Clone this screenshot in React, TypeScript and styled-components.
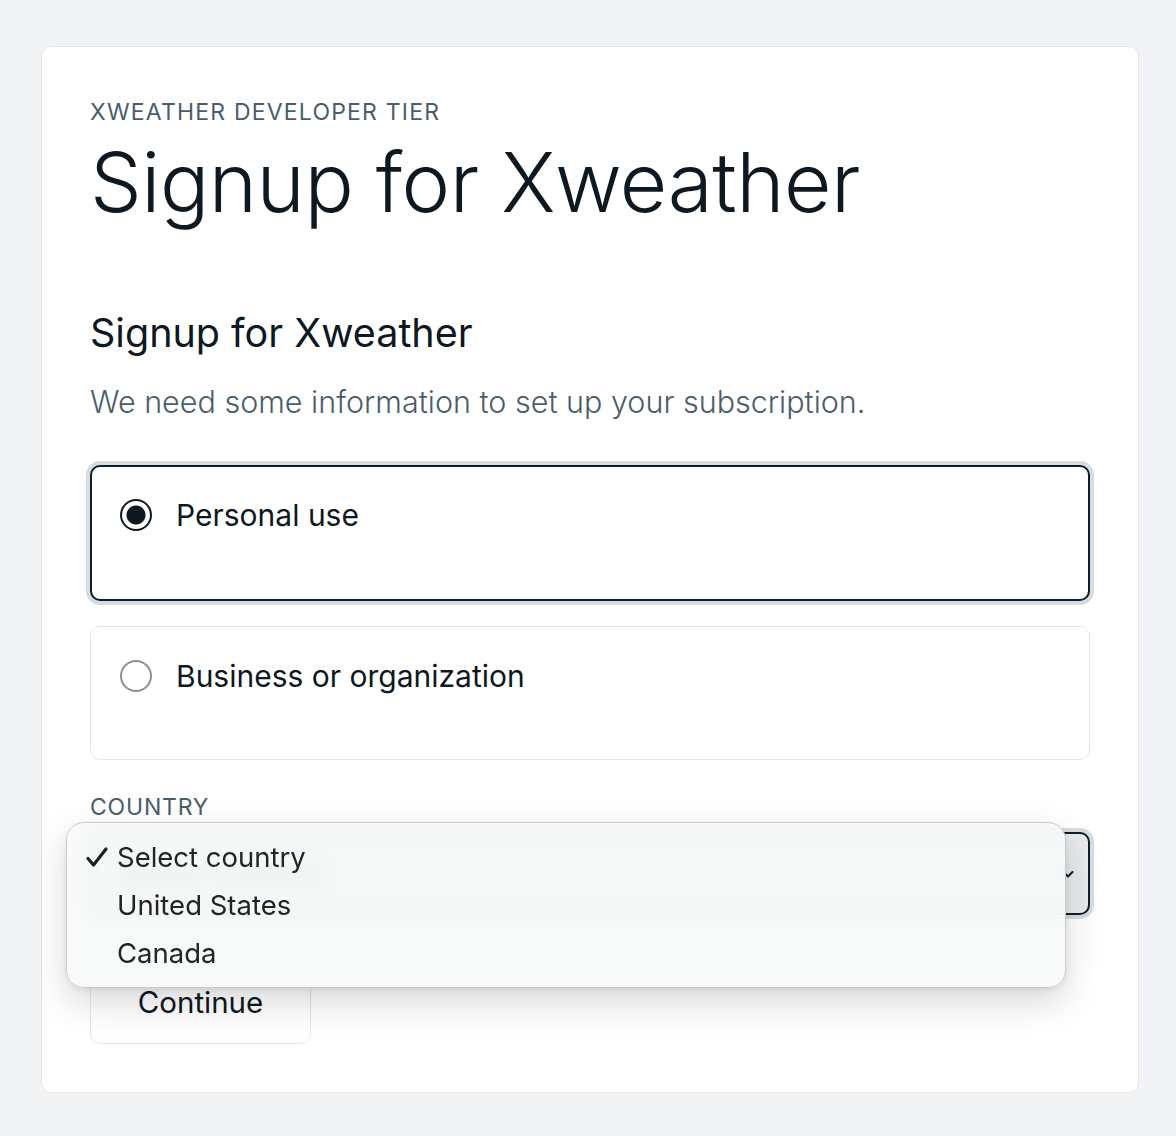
import React from 'react'
import styled, { createGlobalStyle } from 'styled-components'

const GlobalStyle = createGlobalStyle`
  html, body {
    margin: 0;
    padding: 0;
    background: #f1f3f5;
  }
  body {
    font-family: Inter, "Noto Sans", sans-serif;
    color: #0d1821;
  }
`

const options = ['Select country', 'United States', 'Canada']

export default function App() {
  return (
    <>
      <GlobalStyle />
      <Page>
        <Card>
          <Eyebrow>Xweather Developer Tier</Eyebrow>
          <Title>Signup for Xweather</Title>

          <Section>
            <Heading>Signup for Xweather</Heading>
            <Lead>We need some information to set up your subscription.</Lead>

            <Choices>
              <Choice selected>
                <Radio selected />
                <ChoiceLabel>Personal use</ChoiceLabel>
              </Choice>
              <Choice>
                <Radio />
                <ChoiceLabel>Business or organization</ChoiceLabel>
              </Choice>
            </Choices>

            <Field>
              <FieldLabel>Country</FieldLabel>
              <SelectWrap>
                <SelectBox>
                  <SelectText>Select country</SelectText>
                  <svg width="16" height="16" viewBox="0 0 16 16" fill="none">
                    <path d="M3.5 6l4.5 4.5L12.5 6" stroke="#0d1821" strokeWidth="2" strokeLinecap="round" strokeLinejoin="round" />
                  </svg>
                </SelectBox>
                <Menu>
                  {options.map((o, i) => (
                    <MenuItem key={o}>
                      <Check>
                        {i === 0 && (
                          <svg width="24" height="24" viewBox="0 0 24 24" fill="none">
                            <path d="M3 13.5l5.5 6.5L21 4" stroke="#1d1f21" strokeWidth="3.2" strokeLinecap="round" strokeLinejoin="round" />
                          </svg>
                        )}
                      </Check>
                      {o}
                    </MenuItem>
                  ))}
                </Menu>
              </SelectWrap>
            </Field>

            <ContinueButton>Continue</ContinueButton>
          </Section>
        </Card>
      </Page>
    </>
  )
}

const Page = styled.div`
  padding: 46px 37px 44px 41px;
`

const Card = styled.div`
  background: #ffffff;
  border: 1px solid #e4e7ea;
  border-radius: 10px;
  padding: 48px 48px 48px 48px;
`

const Eyebrow = styled.div`
  font-size: 23px;
  line-height: 34px;
  letter-spacing: 1.2px;
  text-transform: uppercase;
  color: #4b5d69;
  margin-bottom: 6px;
`

const Title = styled.h1`
  margin: 0;
  font-size: 82px;
  line-height: 96px;
  font-weight: 300;
  letter-spacing: -0.5px;
  color: #0d1821;
`

const Section = styled.div`
  margin-top: 76px;
`

const Heading = styled.h2`
  margin: 0;
  font-size: 39.5px;
  line-height: 52px;
  font-weight: 420;
  color: #0d1821;
`

const Lead = styled.p`
  margin: 23px 0 0;
  font-size: 30.5px;
  line-height: 40px;
  font-weight: 300;
  color: #4b5d69;
`

const Choices = styled.div`
  display: flex;
  flex-direction: column;
  gap: 25px;
  margin-top: 43px;
`

const Choice = styled.div<{ selected?: boolean }>`
  display: flex;
  align-items: flex-start;
  gap: 24px;
  height: ${p => (p.selected ? '136px' : '134px')};
  box-sizing: border-box;
  padding: ${p => (p.selected ? '32px 28px' : '33px 29px')};
  border-radius: 10px;
  border: ${p => (p.selected ? '2px solid #0f1e2b' : '1px solid #e3e6e9')};
  box-shadow: ${p => (p.selected ? '0 0 0 4px #d6dce0' : 'none')};
  background: #ffffff;
`

const Radio = styled.span<{ selected?: boolean }>`
  flex: none;
  width: 32px;
  height: 32px;
  box-sizing: border-box;
  border-radius: 50%;
  border: 2px solid ${p => (p.selected ? '#0d1821' : '#8b8f96')};
  background: ${p => (p.selected ? 'radial-gradient(circle, #0d1821 0 9px, #ffffff 10px)' : '#ffffff')};
`

const ChoiceLabel = styled.span`
  font-size: 30px;
  line-height: 32px;
  font-weight: 400;
  color: #0d1821;
`

const Field = styled.div`
  margin-top: 32px;
`

const FieldLabel = styled.div`
  font-size: 23px;
  line-height: 30px;
  letter-spacing: 0.8px;
  text-transform: uppercase;
  color: #4b5d69;
`

const SelectWrap = styled.div`
  position: relative;
  margin-top: 10px;
`

const SelectBox = styled.div`
  display: flex;
  align-items: center;
  justify-content: space-between;
  height: 83px;
  box-sizing: border-box;
  padding: 0 12px 0 26px;
  border: 2px solid #0f1e2b;
  border-radius: 10px;
  box-shadow: 0 0 0 4px #d6dce0;
  background: #e8eaec;
`

const SelectText = styled.span`
  font-size: 30px;
  color: #0d1821;
`

const Menu = styled.div`
  position: absolute;
  left: -24px;
  top: -10px;
  width: 1000px;
  box-sizing: border-box;
  padding: 10px 0 10px;
  border-radius: 18px;
  border: 1px solid #c9cbce;
  background: rgba(247, 248, 249, 0.92);
  backdrop-filter: blur(8px);
  box-shadow: 0 14px 36px rgba(0, 0, 0, 0.16), 0 2px 6px rgba(0, 0, 0, 0.08);
`

const MenuItem = styled.div`
  display: flex;
  align-items: center;
  height: 48px;
  padding-left: 18px;
  font-family: Inter, "Liberation Sans", sans-serif;
  font-size: 27.5px;
  color: #222426;
`

const Check = styled.span`
  display: inline-flex;
  align-items: center;
  width: 32px;
`

const ContinueButton = styled.button`
  display: block;
  margin-top: 45px;
  width: 221px;
  height: 84px;
  border: 1px solid #e3e6e9;
  border-radius: 10px;
  background: #ffffff;
  font-family: Inter, sans-serif;
  font-size: 29.5px;
  color: #0d1821;
`
